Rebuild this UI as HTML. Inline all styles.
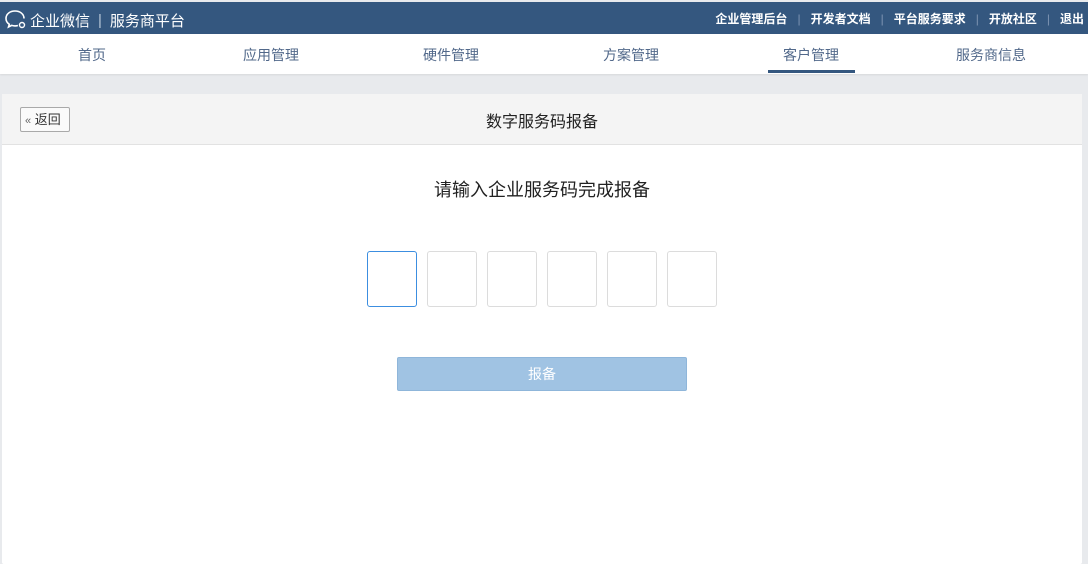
<!DOCTYPE html>
<html><head><meta charset="utf-8"><style>
*{margin:0;padding:0;box-sizing:border-box}
body{width:1088px;height:562px;overflow:hidden;background:#e8eaed;font-family:"Liberation Sans","Noto Sans CJK SC",sans-serif;position:relative}
.top{position:absolute;top:2px;left:0;width:1088px;height:32px;background:#34577f;color:#fff}
.top .l{position:absolute;left:4px;top:7px;font-size:15px;display:flex;align-items:center}
.top .r{position:absolute;right:4px;top:8px;font-size:12px;font-weight:bold}
.top .r span.s{color:#7d94b2;margin:0 10px;font-weight:normal}
.nav{position:absolute;top:34px;left:0;width:1088px;height:40px;background:#fff;box-shadow:0 1px 2px rgba(0,0,0,.08)}
.nav div{position:absolute;top:11px;font-size:14px;color:#51688a;transform:translateX(-50%)}
.ul{position:absolute;left:768px;top:70px;width:87px;height:3px;background:#34577f}
.card{position:absolute;left:2px;top:94px;width:1080px;height:470px;background:#fff;border-radius:2px}
.hd{height:51px;background:#f4f4f4;border-bottom:1px solid #e2e2e2;position:relative}
.hd .t{position:absolute;left:0;right:0;top:14px;text-align:center;font-size:16px;color:#222}
.back{position:absolute;left:18px;top:13px;width:50px;height:25px;border:1px solid #a9a9a9;background:#fafafa;font-size:13px;color:#333;line-height:23px;padding-left:4px;border-radius:2px}
.q{position:absolute;top:82px;left:0;right:0;text-align:center;font-size:18px;color:#222}
.box{position:absolute;top:157px;width:50px;height:56px;border:1px solid #dcdcdc;border-radius:3px}
.btn{position:absolute;left:395px;top:263px;width:290px;height:34px;background:#a0c3e3;border:1px solid #8fb6da;border-radius:2px;color:#fff;font-size:14px;text-align:center;line-height:32px}
</style></head><body>
<div class="top"><div class="l"><svg width="24" height="22" viewBox="0 0 24 22"><path d="M11 2C6 2 2 5 2 9.5c0 2.5 1.3 4.5 3.3 5.8L4.5 18l3.2-1.6c1 .3 2.1.5 3.3.5 1 0 2-.1 2.9-.4" fill="none" stroke="#fff" stroke-width="1.6"/><path d="M11 2c5 0 9 3 9 7.5" fill="none" stroke="#fff" stroke-width="1.6"/><circle cx="18" cy="16" r="2.5" fill="none" stroke="#fff" stroke-width="1.4"/></svg><span style="margin-left:2px">企业微信</span><span style="margin:0 8px;color:#b8c6d8">|</span><span>服务商平台</span></div>
<div class="r">企业管理后台<span class="s">|</span>开发者文档<span class="s">|</span>平台服务要求<span class="s">|</span>开放社区<span class="s">|</span>退出</div></div>
<div class="nav"><div style="left:92px">首页</div><div style="left:271px">应用管理</div><div style="left:451px">硬件管理</div><div style="left:631px">方案管理</div><div style="left:811px">客户管理</div><div style="left:991px">服务商信息</div></div>
<div class="ul"></div>
<div class="card"><div class="hd"><div class="back"><span style="font-size:11px;color:#666">«</span> 返回</div><div class="t">数字服务码报备</div></div>
<div class="q">请输入企业服务码完成报备</div>
<div class="box" style="left:365px;border-color:#3c8ee0"></div><div class="box" style="left:425px"></div><div class="box" style="left:485px"></div><div class="box" style="left:545px"></div><div class="box" style="left:605px"></div><div class="box" style="left:665px"></div>
<div class="btn">报备</div></div>
</body></html>
